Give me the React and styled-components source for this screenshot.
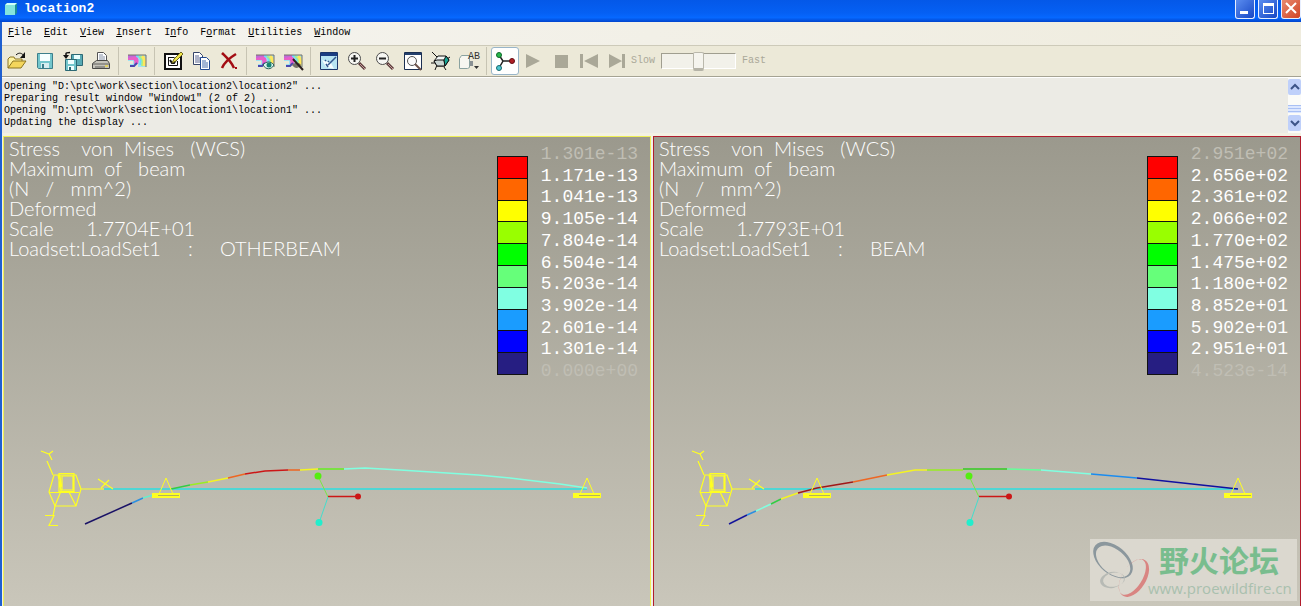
import { useState } from 'react';
import styled, { createGlobalStyle } from 'styled-components';

const menus = [
  { label: 'File', key: 0 },
  { label: 'Edit', key: 0 },
  { label: 'View', key: 0 },
  { label: 'Insert', key: 0 },
  { label: 'Info', key: 1 },
  { label: 'Format', key: 1 },
  { label: 'Utilities', key: 0 },
  { label: 'Window', key: 0 },
];

const messages = [
  'Opening "D:\\ptc\\work\\section\\location2\\location2" ...',
  'Preparing result window "Window1" (2 of 2) ...',
  'Opening "D:\\ptc\\work\\section\\location1\\location1" ...',
  'Updating the display ...',
];

const colors = [
  '#ff0000',
  '#ff6600',
  '#ffff00',
  '#99ff00',
  '#00ff00',
  '#66ff7a',
  '#80ffe2',
  '#1a9cff',
  '#0000ff',
  '#261e82',
];

const leftResult = {
  lines: [
    'Stress    von  Mises   (WCS)',
    'Maximum  of   beam',
    '(N   /   mm^2)',
    'Deformed',
    'Scale      1.7704E+01',
    'Loadset:LoadSet1     :     OTHERBEAM',
  ],
  values: [
    '1.301e-13',
    '1.171e-13',
    '1.041e-13',
    '9.105e-14',
    '7.804e-14',
    '6.504e-14',
    '5.203e-14',
    '3.902e-14',
    '2.601e-14',
    '1.301e-14',
    '0.000e+00',
  ],
  // deformed beam, one coloured piece per stress band
  pieces: [
    ['#1a1266', '85,524 132,503'],
    ['#2b8fe0', '132,503 143,498'],
    ['#66eecc', '143,498 153,495'],
    ['#33cc44', '171,489 190,485'],
    ['#99ee22', '190,485 208,482'],
    ['#f4f422', '208,482 228,478'],
    ['#ee6622', '228,478 245,474'],
    ['#cc1616', '245,474 265,471 288,470'],
    ['#ee6622', '288,470 300,470'],
    ['#f4f422', '300,470 318,469'],
    ['#66ee22', '318,469 344,469'],
    ['#80ffe0', '344,469 365,468 400,470 478,475 510,478 560,484 587,488'],
  ],
};

const rightResult = {
  lines: [
    'Stress    von  Mises   (WCS)',
    'Maximum  of   beam',
    '(N   /   mm^2)',
    'Deformed',
    'Scale      1.7793E+01',
    'Loadset:LoadSet1     :     BEAM',
  ],
  values: [
    '2.951e+02',
    '2.656e+02',
    '2.361e+02',
    '2.066e+02',
    '1.770e+02',
    '1.475e+02',
    '1.180e+02',
    '8.852e+01',
    '5.902e+01',
    '2.951e+01',
    '4.523e-14',
  ],
  pieces: [
    ['#14149a', '78,524 96,515'],
    ['#2b8fe0', '96,515 105,511'],
    ['#80ffe0', '105,511 120,504'],
    ['#33cc44', '120,504 130,499'],
    ['#f4f422', '130,499 147,493'],
    ['#a01818', '147,493 166,488 202,482'],
    ['#ee6622', '202,482 236,475'],
    ['#f4f422', '236,475 264,470 276,470'],
    ['#99ee22', '276,470 312,470'],
    ['#33cc22', '312,469 356,469'],
    ['#66ff9a', '356,469 390,470'],
    ['#80ffe0', '390,470 440,474'],
    ['#1a8cf0', '440,474 486,478'],
    ['#1010a0', '486,478 587,489'],
  ],
};

const Flag = () => (
  <>
    <path d="M1 4h18v12h-8v-3h-3v3H3v-3h3v-3H1z" fill="#9fe3f2" />
    <path d="M1 4h9v3H1z" fill="#c06bd8" />
    <path d="M6 6c4-2 7 2 5 7H7c1-3 0-4-1-4H1V7z" fill="#e95fc8" />
    <path d="M9 5c5 0 6 4 4 9" fill="none" stroke="#6fd8ff" strokeWidth="2" />
    <path d="M12 5c4 2 4 5 3 10" fill="none" stroke="#a4f08a" strokeWidth="2" />
    <path d="M15 5c3 2 3 5 2 10" fill="none" stroke="#ffe65c" strokeWidth="3" />
    <path d="M1 4h18v12" fill="none" stroke="#75706a" />
    <path d="M3 15h4l3-3" fill="none" stroke="#4a49b0" strokeWidth="2" />
  </>
);

const Lens = () => (
  <>
    <path d="M12 12l6 6" stroke="#5b3b3b" strokeWidth="3" />
    <path d="M13 13l5 5" stroke="#c49a9a" />
    <circle cx="7.500" cy="7.500" r="6" fill="#f7f7f3" stroke="#4c4c4c" />
  </>
);

const icons = {
  open: (
    <>
      <path d="M1 17V8l2-2h4l1 2h7v3" fill="#fff3a0" stroke="#8b7420" />
      <path d="M1 17l5-7h13l-5 7z" fill="#f4d65c" stroke="#8b7420" />
      <path d="M9 4c3-3 6-2 8 1" fill="none" stroke="#111" />
      <path d="M18 1v6h-5z" fill="#111" />
    </>
  ),
  save: (
    <>
      <path d="M2.500 2.500h15v15h-14l-1-1z" fill="#73c6cc" stroke="#3d7f8b" />
      <path d="M5 3h10v7H5z" fill="#f6ffff" />
      <path d="M6 12h8v5H6z" fill="#d7eef0" />
      <path d="M7 13h2v4H7z" fill="#3d7f8b" />
    </>
  ),
  saveAs: (
    <>
      <path d="M8.500 3.500h11v11h-11z" fill="#58aab4" stroke="#2d6974" />
      <path d="M11 4h6v4h-6z" fill="#e8ffff" />
      <path d="M2.500 8.500h11v11h-11z" fill="#73c6cc" stroke="#2d6974" />
      <path d="M5 9h6v4H5zM5 15h6v4H5z" fill="#f1ffff" />
      <path d="M6 16h2v3H6z" fill="#2d6974" />
      <path d="M3 5V2.500c0-1 1-1 4-1" fill="none" stroke="#111" strokeWidth="1.500" />
      <path d="M0 4h6L3 8z" fill="#111" />
    </>
  ),
  print: (
    <>
      <path d="M6.500 10V1.500h6l3 3V10" fill="#fff" stroke="#555" />
      <path d="M8 4h4M8 6h6M8 8h6" stroke="#8592a5" />
      <path d="M1.500 12.500l4-3h11l2 3v5h-17z" fill="#c5c3ba" stroke="#494946" />
      <path d="M2 13h16M4 16h10" stroke="#61615c" />
      <path d="M14 14h3v2h-3z" fill="#e2d264" />
    </>
  ),
  result: <Flag />,
  edit: (
    <>
      <path d="M2 3h16v15H2z" fill="#fff" stroke="#111" strokeWidth="2" />
      <path d="M5.500 6.500h6M5.500 6v8.500h9V10" fill="none" stroke="#111" />
      <path d="M7 9l2 3h2l2-3" fill="none" stroke="#111" strokeWidth="2" />
      <path d="M9 12l2-4 7-7 2 2-7 7z" fill="#f1e64b" stroke="#6d661c" />
    </>
  ),
  copy: (
    <>
      <path d="M2.500 1.500h6l3 3v9h-9z" fill="#fff" stroke="#354468" />
      <path d="M4 5h4M4 7h6M4 9h6M4 11h6" stroke="#5a6790" />
      <path d="M9.500 6.500h6l3 3v9h-9z" fill="#fff" stroke="#234a92" />
      <path d="M11 10h4M11 12h6M11 14h6M11 16h6" stroke="#466cab" />
    </>
  ),
  remove: (
    <>
      <path d="M3 2c4 4 9 8 12 15M17 3C12 6 6 10 3 17" fill="none" stroke="#a30d13" strokeWidth="2.500" />
      <path d="M16 16h2v2h-2z" fill="#a30d13" />
    </>
  ),
  show: (
    <>
      <Flag />
      <path d="M8 14c3-4 8-4 11 0-3 5-8 5-11 0z" fill="#d8f4ee" stroke="#285d56" />
      <circle cx="14" cy="14" r="2.500" fill="#178371" />
    </>
  ),
  hide: (
    <>
      <Flag />
      <path d="M9 14c3-3 7-3 9 0-3 4-6 4-9 0z" fill="#777268" />
      <path d="M10 8l10 11" stroke="#2d2020" strokeWidth="2" />
    </>
  ),
  repaint: (
    <>
      <path d="M1.500 1.500h17v17h-17z" fill="#b8e4f2" stroke="#1d366b" />
      <path d="M2 2h16v3H2z" fill="#1b3d82" />
      <path d="M3 9l9 3 3 6-8-2z" fill="#f5fcff" />
      <path d="M9 14l8-8M6 9l1 1M9 10l1 1M7 13l2 3" stroke="#31558e" strokeWidth="1.500" />
    </>
  ),
  zoomIn: (
    <>
      <Lens />
      <path d="M4 7.500h7M7.500 4v7" stroke="#222" strokeWidth="2" />
    </>
  ),
  zoomOut: (
    <>
      <Lens />
      <path d="M4 7.500h7" stroke="#222" strokeWidth="2" />
    </>
  ),
  refit: (
    <>
      <path d="M1.500 1.500h17v17h-17z" fill="#fff" stroke="#1b2f52" />
      <path d="M2 2h16v2H2z" fill="#23406d" />
      <circle cx="9" cy="10" r="4.500" fill="#fafafa" stroke="#555" />
      <path d="M12 13l6 6" stroke="#6b5149" strokeWidth="2" />
    </>
  ),
  orient: (
    <>
      <path d="M1 1l5 5M16 8l3-2M6 14l-2 5M0 12h5M13 16l2 3" stroke="#111" />
      <path d="M3 10l4-5h8l3 4-4 6H6z" fill="#f3f8f7" stroke="#111" />
      <path d="M3 10l3-1h7l1 6H6z" fill="#cbd6d3" stroke="#111" />
      <path d="M13 9l2-4 3 4-4 6z" fill="#17a695" stroke="#111" />
    </>
  ),
  views: (
    <>
      <path d="M0.500 7.500l2-3h8v12l-2 1h-8z" fill="#f7f7f1" stroke="#8aa2a0" />
      <path d="M11 10h3v5h-3z" fill="#8a9193" />
      <path d="M15 15h5l-2.500 3z" fill="#333" />
      <text x="9" y="8" fontSize="10" fill="#333">
        AB
      </text>
    </>
  ),
  center: (
    <>
      <path d="M4 4l4 6-4 7M8 10h9" fill="none" stroke="#222" strokeWidth="1.500" />
      <circle cx="4" cy="4" r="2.500" fill="#28b84b" stroke="#0e682b" />
      <circle cx="4" cy="17" r="2.500" fill="#4fc6cf" stroke="#17686f" />
      <circle cx="17" cy="10" r="2.500" fill="#b02025" stroke="#650b12" />
    </>
  ),
  play: <path d="M3 3l14 7-14 7z" fill="#aaa898" />,
  stop: <path d="M4 4h13v13H4z" fill="#aaa898" />,
  first: <path d="M1 3h3v14H1zM19 3v14L5 10z" fill="#aaa898" />,
  last: <path d="M2 3v14l13-7zM15 3h3v14h-3z" fill="#aaa898" />,
};

const toolGroups = [
  ['open', 'save', 'saveAs', 'print'],
  ['result'],
  ['edit', 'copy', 'remove'],
  ['show', 'hide'],
  ['repaint', 'zoomIn', 'zoomOut', 'refit', 'orient', 'views'],
  ['center', 'play', 'stop', 'first', 'last'],
];

const Support = ({ x }) => (
  <g>
    <path d={`M${x - 7} 494L${x} 478l7 16`} fill="none" stroke="#ffff22" />
    <path d={`M${x - 14} 493h28v5h-28z`} fill="#ffff22" />
    <path d={`M${x - 8} 495.500h21`} stroke="#b5b258" />
  </g>
);

const Drawing = ({ pieces, supportX, start }) => (
  <Canvas viewBox={`${start} 440 646 100`} preserveAspectRatio="xMinYMin slice">
    <rect x="104" y="488" width="483" height="2" fill="#33dddd" opacity="0.8" />
    {pieces.map(([color, points]) => (
      <polyline key={points} points={points} fill="none" stroke={color} strokeWidth="1.500" />
    ))}
    <g fill="none" stroke="#ffff22" strokeWidth="1.200">
      {/* coordinate system */}
      <path d="M41 451l8 3 4-3M49 454l3 6M47 461l6 14" />
      <path d="M98 479l15 10M109 480l-8 8M81 489h23" />
      <path d="M54 475h22l5 14-5 17H55l-6-14z" />
      <path d="M59 473.500h15v18H59zM62 476h11v14H62zM58 475l3 16-6 15M49 492.500h30M69 492l7 14M60 475l1 12" />
      <path d="M55 506l-2 10M45 515.500h9l-5 10h9" />
    </g>
    <Support x={supportX} />
    <Support x={587} />
    <path d="M318 476l10 21" stroke="#77e844" />
    <path d="M328 496.500h30" stroke="#cc1616" strokeWidth="1.500" />
    <path d="M328 497l-9 26" stroke="#44ddcc" />
    <circle cx="318" cy="476" r="3.500" fill="#55ee11" />
    <circle cx="358" cy="496.500" r="3" fill="#cc1616" />
    <circle cx="319" cy="522.500" r="3.500" fill="#22eecc" />
  </Canvas>
);

const ResultPanel = ({ result, color, supportX, start }) => (
  <Panel $color={color}>
    <PanelHead>
      <Caption>
        {result.lines.map((line) => (
          <p key={line}>{line}</p>
        ))}
      </Caption>
      <Legend>
        <ColorBar>
          {colors.map((item) => (
            <Swatch key={item} $color={item} />
          ))}
        </ColorBar>
        <Values>
          {result.values.map((value) => (
            <li key={value}>{value}</li>
          ))}
        </Values>
      </Legend>
    </PanelHead>
    <Drawing pieces={result.pieces} supportX={supportX} start={start} />
  </Panel>
);

const App = () => {
  const [speed, setSpeed] = useState(50);

  return (
    <Frame>
      <GlobalStyle />
      <TitleBar>
        <svg width="14" height="14" viewBox="0 0 14 14">
          <path d="M1 3l2-2h10v10l-2 2H1z" fill="#1b8d97" />
          <path d="M1 3h10v10H1z" fill="#84e4dd" />
          <path d="M1 3l2-2h10l-2 2z" fill="#d1fffa" />
        </svg>
        <h1>location2</h1>
        <WindowButton aria-label="Minimize">
          <svg width="20" height="18" viewBox="0 0 20 18">
            <path d="M4 11h8v3H4z" fill="#fff" />
          </svg>
        </WindowButton>
        <WindowButton aria-label="Maximize">
          <svg width="18" height="18" viewBox="0 0 18 18">
            <path d="M4 3h11v11H4zm1 3v7h9V6z" fill="#fff" fillRule="evenodd" />
          </svg>
        </WindowButton>
        <WindowButton $close aria-label="Close">
          <svg width="18" height="18" viewBox="0 0 18 18">
            <path d="M4 3l10 10M14 3L4 13" stroke="#fff" strokeWidth="2" />
          </svg>
        </WindowButton>
      </TitleBar>

      <Body>
        <MenuBar>
          {menus.map(({ label, key }) => (
            <button type="button" key={label}>
              {label.slice(0, key)}
              <u>{label[key]}</u>
              {label.slice(key + 1)}
            </button>
          ))}
        </MenuBar>

        <ToolBar>
          {toolGroups.map((group) => (
            <ToolGroup key={group[0]}>
              {group.map((name) => (
                <ToolButton type="button" key={name} aria-label={name} $active={name === 'center'}>
                  <svg width="20" height="20" viewBox="0 0 20 20">
                    {icons[name]}
                  </svg>
                </ToolButton>
              ))}
            </ToolGroup>
          ))}
          <Speed>
            <label htmlFor="speed">Slow</label>
            <input
              id="speed"
              type="range"
              value={speed}
              onChange={(event) => setSpeed(event.target.value)}
            />
            <span>Fast</span>
          </Speed>
        </ToolBar>

        <Log>
          <div>
            {messages.map((message) => (
              <p key={message}>{message}</p>
            ))}
          </div>
          <Scroll>
            <button type="button" aria-label="Scroll up">
              <svg width="12" height="10" viewBox="0 0 12 10">
                <path d="M2 7l4-4 4 4" fill="none" stroke="#3c5489" strokeWidth="2" />
              </svg>
            </button>
            <Thumb />
            <button type="button" aria-label="Scroll down">
              <svg width="12" height="10" viewBox="0 0 12 10">
                <path d="M2 3l4 4 4-4" fill="none" stroke="#3c5489" strokeWidth="2" />
              </svg>
            </button>
          </Scroll>
        </Log>

        <Panels>
          <ResultPanel result={leftResult} color="#eeee55" supportX={166} start={4} />
          <ResultPanel result={rightResult} color="#b01c2c" supportX={166} start={3} />
        </Panels>
      </Body>

      <Watermark>
        <svg width="60" height="62" viewBox="0 0 60 62" fillRule="evenodd">
          <path
            transform="rotate(40 23 21)"
            d="M0 21a23 14 0 1 0 46 0a23 14 0 1 0-46 0zM4 22a20 12 0 1 0 40 0a20 12 0 1 0-40 0z"
            fill="#8b979d"
          />
          <path
            transform="rotate(-58 44 39)"
            d="M23 39a21 12 0 1 0 42 0a21 12 0 1 0-42 0zM24 37a20 10 0 1 0 40 0a20 10 0 1 0-40 0z"
            fill="#d98582"
          />
          <path
            transform="rotate(-10 22 41)"
            d="M10 41a12 8 0 1 0 24 0a12 8 0 1 0-24 0zM13 41a11 7 0 1 0 22 0a11 7 0 1 0-22 0z"
            fill="#b7bab5"
          />
        </svg>
        <div>
          <strong>野火论坛</strong>
          <span>www.proewildfire.cn</span>
        </div>
      </Watermark>
    </Frame>
  );
};

const GlobalStyle = createGlobalStyle`
  * {
    box-sizing: border-box;
  }
  body, h1, p, ul {
    margin: 0;
    padding: 0;
  }
  button {
    padding: 0;
    border: 0;
    background: none;
    color: inherit;
    font: inherit;
  }
  svg {
    display: block;
  }
`;

const Frame = styled.div`
  position: relative;
  display: flex;
  flex-direction: column;
  min-height: 100vh;
  overflow: hidden;
  font: 10px/12px 'Liberation Mono', monospace;
  color: #000;
  background: #1f5fd0;
`;

const TitleBar = styled.header`
  display: flex;
  align-items: flex-start;
  gap: 3px;
  height: 22px;
  padding-left: 4px;
  background: linear-gradient(#0458e8, #0560f4 60%, #0668ff 80%, #0144cc);
  > svg {
    margin-top: 2px;
  }
  h1 {
    flex: 1;
    padding-left: 3px;
    font-size: 13px;
    line-height: 18px;
    color: #fff;
  }
`;

const WindowButton = styled.button`
  width: 20px;
  height: 19px;
  overflow: hidden;
  border: 1px solid #e8efff;
  border-top: 0;
  border-radius: 0 0 3px 3px;
  background: ${({ $close }) =>
    $close ? 'linear-gradient(135deg, #e88a70, #d04324)' : 'linear-gradient(135deg, #5b8df0, #1747c4)'};
`;

const Body = styled.main`
  display: flex;
  flex: 1;
  flex-direction: column;
  margin-left: 2px;
  background: #ece9d8;
`;

const MenuBar = styled.nav`
  display: flex;
  gap: 12px;
  height: 24px;
  padding: 0 6px;
  border-bottom: 1px solid #cdcab9;
  background: linear-gradient(90deg, #f5f4f0, #efecde);
  button {
    padding-bottom: 2px;
  }
`;

const ToolBar = styled.div`
  display: flex;
  align-items: center;
  height: 31px;
  padding-left: 1px;
  border-bottom: 1px solid #a5a393;
  background: #ece9d8;
`;

const ToolGroup = styled.div`
  display: flex;
  & + &::before {
    content: '';
    width: 8px;
    height: 28px;
    background: linear-gradient(#c7c4b3, #c7c4b3) 3px 0 / 1px 100% no-repeat;
  }
`;

const ToolButton = styled.button`
  display: grid;
  place-items: center;
  width: 28px;
  height: 28px;
  border: 1px solid ${({ $active }) => ($active ? '#98b5c9' : 'transparent')};
  border-radius: 3px;
  background: ${({ $active }) => ($active ? '#fff' : 'none')};
  svg {
    overflow: visible;
  }
`;

const Speed = styled.div`
  display: flex;
  align-items: center;
  gap: 6px;
  color: #aaa898;
  input {
    appearance: none;
    width: 75px;
    height: 16px;
    margin: 0;
    border: 1px solid #fff;
    border-top-color: #a09e90;
    border-left-color: #a09e90;
    background: #f2f1ea;
  }
  input::-webkit-slider-thumb {
    appearance: none;
    width: 11px;
    height: 19px;
    border: 1px solid #bab8ac;
    border-bottom: 3px solid #b5b3a7;
    border-radius: 2px;
    background: #f5f4ee;
  }
`;

const Log = styled.section`
  display: flex;
  justify-content: space-between;
  height: 56px;
  border-top: 1px solid #fff;
  background: #ecebe5;
  > div:first-child {
    padding: 3px 2px;
  }
`;

const Scroll = styled.div`
  display: flex;
  flex-direction: column;
  justify-content: space-between;
  width: 13px;
  padding: 1px 0 2px;
  background: #fbfbf8;
  button {
    display: grid;
    place-items: center;
    height: 16px;
    border-radius: 2px;
    background: #bfd0fa;
  }
`;

const Thumb = styled.div`
  height: 8px;
  margin: 8px 0 0;
  background: repeating-linear-gradient(#a9c0f4 0 1px, #dce7ff 1px 3px);
`;

const Panels = styled.div`
  display: grid;
  grid-template-columns: 1fr 1fr;
  flex: 1;
  gap: 2px;
  padding: 3px 0 0 1px;
  background: #f3f1e4;
`;

const Panel = styled.section`
  min-width: 0;
  border: 1px solid ${({ $color }) => $color};
  border-bottom: 0;
  background: linear-gradient(#9b998d, #c9c6ba);
`;

const PanelHead = styled.div`
  display: flex;
  justify-content: space-between;
  height: 303px;
  padding: 1px 12px 0 5px;
  color: #fff;
`;

const Caption = styled.div`
  font: 300 20px/20px Lato, sans-serif;
  white-space: pre;
`;

const Legend = styled.div`
  display: flex;
  gap: 13px;
  height: 239px;
  padding-top: 5px;
`;

const ColorBar = styled.div`
  display: flex;
  flex-direction: column;
  width: 31px;
  height: 219px;
  margin-top: 13px;
  border: 1px solid #111;
`;

const Swatch = styled.div`
  flex: 1;
  background: ${({ $color }) => $color};
  & + & {
    border-top: 1px solid #111;
  }
`;

const Values = styled.ul`
  display: flex;
  flex-direction: column;
  height: 239px;
  list-style: none;
  font-size: 18px;
  li {
    display: flex;
    flex: 1;
    align-items: center;
  }
  li:first-child,
  li:last-child {
    color: #c0beb4;
  }
`;

const Canvas = styled.svg`
  width: 100%;
  height: 100px;
`;

const Watermark = styled.aside`
  position: absolute;
  right: 4px;
  bottom: 5px;
  display: flex;
  width: 207px;
  height: 62px;
  background: #dbd8cf;
  div {
    display: flex;
    flex-direction: column;
    margin-left: -2px;
  }
  strong {
    padding-left: 11px;
    font: 700 30px/40px 'Noto Sans CJK SC', sans-serif;
    color: #79bd8e;
  }
  span {
    font: 15px/18px 'Open Sans', sans-serif;
    color: #a9c0ae;
  }
`;

export default App;
